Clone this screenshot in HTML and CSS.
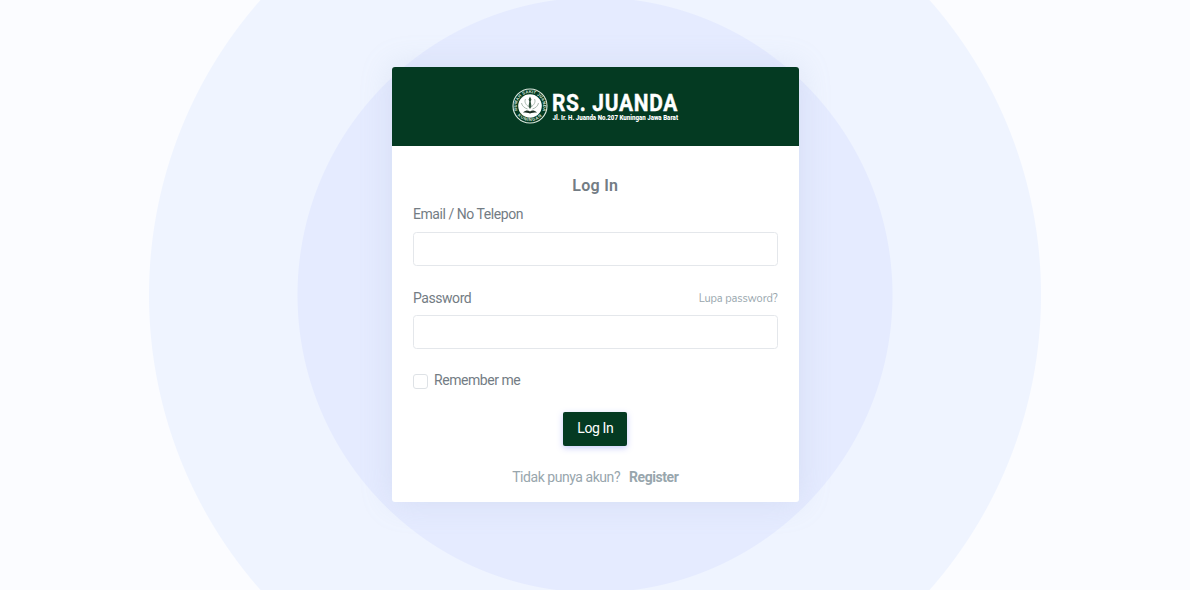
FILE: index.html
```html
<!DOCTYPE html>
<html lang="id">
<head>
<meta charset="utf-8">
<title>Log In</title>
<link rel="stylesheet" href="styles.css">
</head>
<body>
<main class="card">
  <header class="card-header">
    <svg class="logo" width="170" height="44" viewBox="0 0 170 44">
      <defs>
        <path id="arc-top" d="M5.500 24.500A13.200 13.200 0 1 1 30.500 24.500"/>
        <path id="arc-bottom" d="M5 28.500A16.100 16.100 0 0 0 31 28.500"/>
      </defs>
      <circle cx="18" cy="20" r="17" fill="none" stroke="#dce8df" stroke-width="1.100"/>
      <circle cx="18" cy="20" r="11.800" fill="#fff"/>
      <text class="seal-text"><textPath href="#arc-top" textLength="50">RUMAH SAKIT JUANDA</textPath></text>
      <text class="seal-text"><textPath href="#arc-bottom" textLength="27" startOffset="1">KUNINGAN</textPath></text>
      <path d="M18 10.500l1.400 3-.7 2 .8 5-1.500 2.500-1.500-2.500.8-5-.7-2z" fill="#31533f"/>
      <path d="M13.500 13c-1.500 3 .5 6 3.500 8M22.500 13c1.500 3-.5 6-3.500 8M9.500 17c.5 3 3 5 6 6M26.500 17c-.5 3-3 5-6 6" fill="none" stroke="#93a79a" stroke-width=".8"/>
      <path d="M11 26.500c3-2.500 5-2.500 7-1 2-1.500 4-1.500 7 1-3 0-5 0-7 1-2-1-4-1-7-1z" fill="#1c2f25"/>
      <text class="logo-name" x="40" y="24.500" textLength="126" lengthAdjust="spacingAndGlyphs">RS. JUANDA</text>
      <text class="logo-address" x="40.500" y="33.500" textLength="125.500" lengthAdjust="spacingAndGlyphs">Jl. Ir. H. Juanda No.207 Kuningan Jawa Barat</text>
    </svg>
  </header>
  <form class="card-body">
    <h1 class="title">Log In</h1>
    <label class="label label-email" for="email">Email / No Telepon</label>
    <input class="field" id="email" type="text">
    <div class="password-row">
      <label class="label label-password" for="password">Password</label>
      <a class="forgot">Lupa password?</a>
    </div>
    <input class="field" id="password" type="password">
    <label class="remember"><input class="checkbox" type="checkbox"><span>Remember me</span></label>
    <button class="submit" type="button">Log In</button>
    <p class="signup"><span class="signup-question">Tidak punya akun?</span><a class="register">Register</a></p>
  </form>
</main>
</body>
</html>
```

FILE: styles.css
```css
* { box-sizing: border-box; }
body {
  margin: 0;
  height: 590px;
  padding-top: 67px;
  overflow: hidden;
  font-family: Roboto, "Liberation Sans", sans-serif;
  font-size: 14px;
  letter-spacing: -.45px;
  color: #737c84;
  background: radial-gradient(circle at 595px 295px, #e5ebff 297px, #eff4ff 298px, #eff4ff 445.5px, #fbfcff 446.5px);
}
.card {
  width: 407px;
  height: 435px;
  margin-left: 392px;
  background: #fff;
  border-radius: 3px;
  box-shadow: 0 0 32px rgba(154, 175, 207, .22);
}
.card-header {
  height: 79px;
  display: flex;
  padding: 19px 0 0 119.5px;
  background: #043a22;
  border-radius: 3px 3px 0 0;
}
.logo { display: block; }
.seal-text { font: bold 4.2px "Liberation Sans", sans-serif; letter-spacing: 0; fill: #dce8df; }
.logo-name { font: bold 24.5px Roboto, sans-serif; letter-spacing: .8px; fill: #fff; stroke: #fff; stroke-width: .4px; }
.logo-address { font: 900 6.8px Roboto, sans-serif; letter-spacing: 0; fill: #fff; }
.card-body {
  display: flex;
  flex-direction: column;
  padding: 30px 21.5px 0 21.5px;
}
.title {
  margin: 0;
  text-align: center;
  font-size: 16px;
  line-height: 20px;
  font-weight: 600;
  letter-spacing: .3px;
}
.label { line-height: 18px; }
.label-email { margin-top: 9px; }
.field {
  width: 100%;
  height: 34px;
  padding: 0 12px;
  margin: 9px 0 0;
  border: 1px solid #e4e7eb;
  border-radius: 3.5px;
  background: #fff;
}
.card-body { padding-left: 21px; }
.password-row {
  display: flex;
  justify-content: space-between;
  align-items: center;
  margin-top: 22px;
}
.password-row + .field { margin-top: 8px; }
.forgot {
  padding-top: 3px;
  font: 11px/16px "Nunito", "Open Sans", sans-serif;
  letter-spacing: -.1px;
  color: #98a6ad;
}
.remember {
  display: flex;
  align-items: center;
  gap: 6px;
  margin-top: 22px;
  line-height: 18px;
}
.checkbox {
  appearance: none;
  width: 15px;
  height: 15px;
  margin: 2px 0 0;
  border: 1px solid #dee2e6;
  border-radius: 3px;
}
.submit {
  align-self: center;
  width: 64px;
  height: 34px;
  margin-top: 23px;
  padding: 0 0 2px;
  border: 0;
  border-radius: 2px;
  background: #043a22;
  color: #fff;
  font: 14px/32px Roboto, sans-serif;
  letter-spacing: -.4px;
  box-shadow: 0 2px 6px rgba(114, 124, 245, .4);
}
.signup {
  display: flex;
  justify-content: center;
  gap: 9px;
  margin: 22px 0 0;
  line-height: 18px;
  color: #98a6ad;
}
.register { font-weight: 700; }
```
